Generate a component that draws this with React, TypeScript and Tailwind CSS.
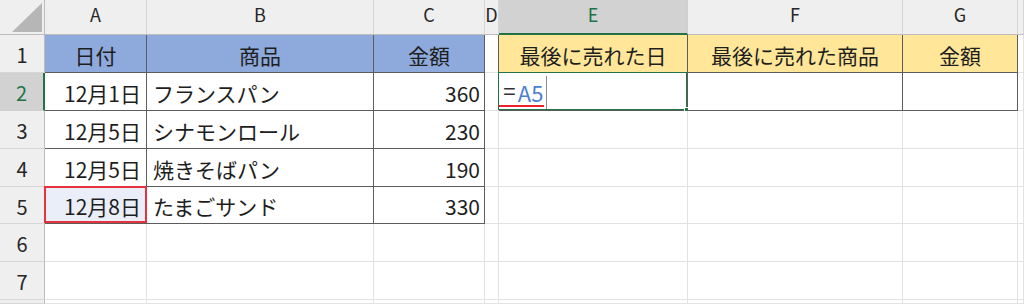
import React from "react";

type CellProps = {
  className?: string;
  children?: React.ReactNode;
};

// Plain worksheet cell: light gridlines on the right and bottom edge.
const Cell: React.FC<CellProps> = ({ className = "", children }) => (
  <div
    className={`relative flex items-center whitespace-nowrap pt-[3px] text-[21px] leading-none text-[#1e1e1e] ${className}`}
  >
    {children}
  </div>
);

const gridLine = "border-r border-b border-[#e2e2e2] bg-white";
const tableLine = "border-r border-b border-[#5c5c5c]";

const ColHeader: React.FC<{ label: string; active?: boolean }> = ({ label, active }) => (
  <div
    className={
      active
        ? "flex items-start justify-center border-r border-b-2 border-r-[#d0d0d0] border-b-[#217346] bg-[#d2d2d2] pt-[5px] text-[18px] leading-none text-[#217346]"
        : "flex items-start justify-center border-r border-b border-r-[#d6d6d6] border-b-[#bdbdbd] bg-[#efefef] pt-[5px] text-[18px] leading-none text-[#262626]"
    }
  >
    {label}
  </div>
);

const RowHeader: React.FC<{ label?: string; active?: boolean }> = ({ label, active }) => (
  <div
    className={
      active
        ? "flex items-center justify-center border-r-2 border-b border-r-[#217346] border-b-[#d0d0d0] bg-[#d2d2d2] pt-[3px] text-[20px] leading-none text-[#217346]"
        : "flex items-center justify-center border-r border-b border-r-[#bdbdbd] border-b-[#d6d6d6] bg-[#efefef] pt-[3px] text-[20px] leading-none text-[#262626]"
    }
  >
    {label}
  </div>
);

const sales = [
  { date: "12月1日", item: "フランスパン", price: 360 },
  { date: "12月5日", item: "シナモンロール", price: 230 },
  { date: "12月5日", item: "焼きそばパン", price: 190 },
  { date: "12月8日", item: "たまごサンド", price: 330 },
];

const App: React.FC = () => {
  return (
    <div className="h-[304px] w-[1024px] overflow-hidden bg-white font-['Noto_Sans_CJK_JP','Noto_Sans',sans-serif]">
      <div className="grid h-full grid-cols-[45px_102px_227px_111px_14px_189px_215px_115px_1fr] grid-rows-[35px_38px_38px_38px_38px_37px_38px_38px_1fr]">
        {/* column headers */}
        <div className="relative border-r border-b border-r-[#bdbdbd] border-b-[#bdbdbd] bg-[#efefef]">
          <svg className="absolute left-0 top-0" width="44" height="34" viewBox="0 0 44 34">
            <polygon points="12,32 42,32 42,3" fill="#b6b6b6" />
          </svg>
        </div>
        <ColHeader label="A" />
        <ColHeader label="B" />
        <ColHeader label="C" />
        <ColHeader label="D" />
        <ColHeader label="E" active />
        <ColHeader label="F" />
        <ColHeader label="G" />
        <ColHeader label="" />

        {/* row 1: table headings */}
        <RowHeader label="1" />
        <Cell className={`${tableLine} justify-center bg-[#8ea9db]`}>日付</Cell>
        <Cell className={`${tableLine} justify-center bg-[#8ea9db]`}>商品</Cell>
        <Cell className={`${tableLine} justify-center bg-[#8ea9db]`}>金額</Cell>
        <Cell className="border-r border-b border-r-[#5c5c5c] border-b-[#e2e2e2] bg-white" />
        <Cell className={`${tableLine} justify-center bg-[#ffe699]`}>最後に売れた日</Cell>
        <Cell className={`${tableLine} justify-center bg-[#ffe699]`}>最後に売れた商品</Cell>
        <Cell className={`${tableLine} justify-center bg-[#ffe699]`}>金額</Cell>
        <Cell className={gridLine} />

        {/* rows 2-5: sales data */}
        {sales.map((row, i) => (
          <React.Fragment key={i}>
            <RowHeader label={String(i + 2)} active={i === 0} />
            <Cell className={`${tableLine} justify-end pr-[5px] ${i === 3 ? "bg-[#e9eef8]" : "bg-white"}`}>
              {row.date}
              {i === 3 && (
                <span className="pointer-events-none absolute -left-px -top-px -right-px bottom-0 border-2 border-[#e5323c]" />
              )}
            </Cell>
            <Cell className={`${tableLine} bg-white pl-[6px]`}>{row.item}</Cell>
            <Cell className={`${tableLine} justify-end bg-white pr-[4px]`}>{row.price}</Cell>
            <Cell className={gridLine} />
            {i === 0 ? (
              <>
                <Cell className={`${tableLine} bg-white`}>
                  {/* in-cell formula editor */}
                  <div className="relative flex h-full w-[48px] items-center border-r border-[#8c8c8c] pb-[2px] pl-[4px]">
                    <span className="font-['Liberation_Sans',sans-serif] text-[22px] text-[#333333]">=</span>
                    <span className="ml-[2px] text-[22px] text-[#4a7fd4]">A5</span>
                    <span className="absolute bottom-[3px] left-0 right-[2px] h-[2px] bg-[#e8232e]" />
                  </div>
                  <span className="pointer-events-none absolute -left-px -top-px right-0 bottom-0 border-[1.5px] border-[#217346]" />
                  <span className="absolute -bottom-[3px] -right-[3px] h-[5px] w-[5px] bg-[#217346] ring-1 ring-white" />
                </Cell>
                <Cell className={`${tableLine} bg-white`} />
                <Cell className={`${tableLine} bg-white`} />
              </>
            ) : (
              <>
                <Cell className={gridLine} />
                <Cell className={gridLine} />
                <Cell className={gridLine} />
              </>
            )}
            <Cell className={gridLine} />
          </React.Fragment>
        ))}

        {/* rows 6-8: empty, row 8 runs off the bottom edge */}
        {["6", "7", ""].map((n, i) => (
          <React.Fragment key={i}>
            <RowHeader label={n} />
            <Cell className={gridLine} />
            <Cell className={gridLine} />
            <Cell className={gridLine} />
            <Cell className={gridLine} />
            <Cell className={gridLine} />
            <Cell className={gridLine} />
            <Cell className={gridLine} />
            <Cell className={gridLine} />
          </React.Fragment>
        ))}
      </div>
    </div>
  );
};

export default App;
